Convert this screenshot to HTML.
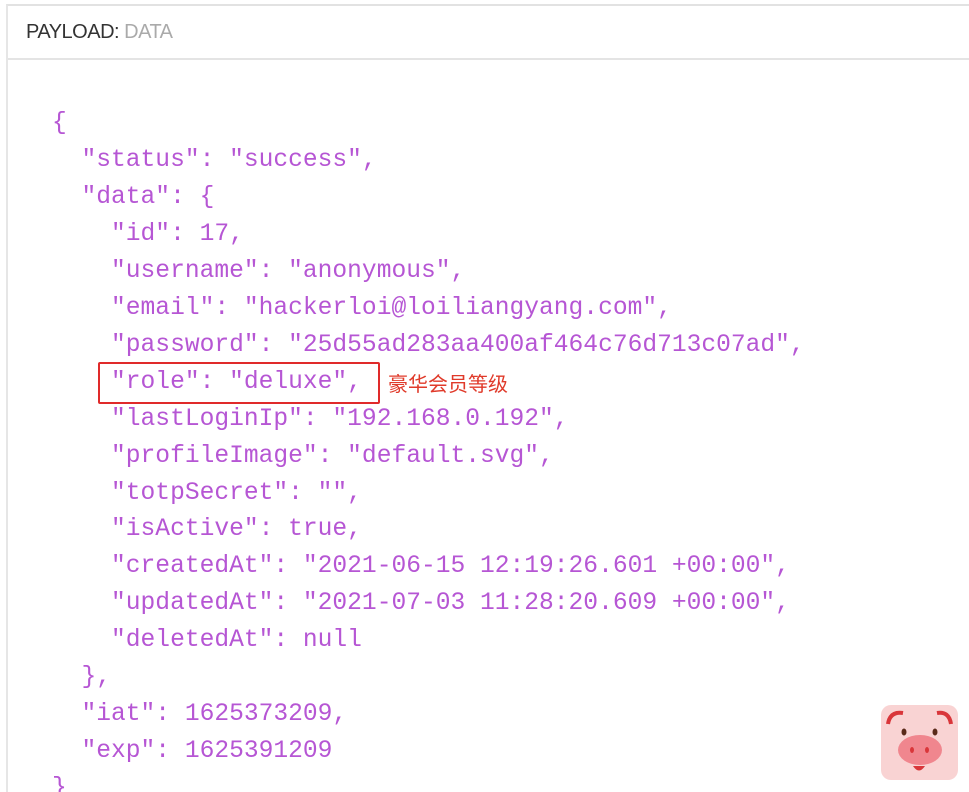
<!DOCTYPE html>
<html><head><meta charset="utf-8"><style>
html,body{margin:0;padding:0;background:#fff;width:969px;height:792px;overflow:hidden;position:relative}
.frame{position:absolute;left:6px;top:4px;width:980px;height:800px;border-left:2px solid #e6e6e6;border-top:2px solid #e2e2e2}
.hdr{position:absolute;left:8px;top:6px;width:970px;height:52px;border-bottom:2px solid #e4e4e4;background:#fff}
.hdr span{position:absolute;left:18px;top:15px;font:20px "Liberation Sans",sans-serif;letter-spacing:-0.5px}
pre{position:absolute;left:52px;top:106px;margin:0;font:24.6px/36.95px "Liberation Mono",monospace;color:#b656d4}
.box{position:absolute;left:98px;top:362px;width:278px;height:38px;border:2px solid #e02a2a;border-radius:2px}
.note{position:absolute;left:388px;top:368px;font:20px "Liberation Sans","Noto Sans CJK SC",sans-serif;color:#e03a2a}
</style></head><body>
<div class="frame"></div>
<div class="hdr"><span><b style="font-weight:normal;color:#333">PAYLOAD:</b> <b style="font-weight:normal;color:#aaa">DATA</b></span></div>
<pre>{
  "status": "success",
  "data": {
    "id": 17,
    "username": "anonymous",
    "email": "hackerloi@loiliangyang.com",
    "password": "25d55ad283aa400af464c76d713c07ad",
    "role": "deluxe",
    "lastLoginIp": "192.168.0.192",
    "profileImage": "default.svg",
    "totpSecret": "",
    "isActive": true,
    "createdAt": "2021-06-15 12:19:26.601 +00:00",
    "updatedAt": "2021-07-03 11:28:20.609 +00:00",
    "deletedAt": null
  },
  "iat": 1625373209,
  "exp": 1625391209
}</pre>
<div class="box"></div>
<div class="note">豪华会员等级</div>
<svg style="position:absolute;left:881px;top:705px" width="77" height="75" viewBox="0 0 77 75">
<rect x="0" y="0" width="77" height="75" rx="10" fill="#f9d3d3"/>
<path d="M7 19 Q9 6 22 8" stroke="#d9363a" stroke-width="4" fill="none"/>
<path d="M56 8 Q68 6 70 19" stroke="#d9363a" stroke-width="4" fill="none"/>
<ellipse cx="23" cy="27" rx="2.5" ry="3.5" fill="#5a2a1a"/>
<ellipse cx="54" cy="27" rx="2.5" ry="3.5" fill="#5a2a1a"/>
<ellipse cx="39" cy="45" rx="22" ry="15" fill="#f0868e"/>
<ellipse cx="31" cy="45" rx="2" ry="3" fill="#d9363a"/>
<ellipse cx="46" cy="45" rx="2" ry="3" fill="#d9363a"/>
<path d="M32 61 Q38 70 44 61 Z" fill="#d9363a"/>
</svg>
</body></html>
